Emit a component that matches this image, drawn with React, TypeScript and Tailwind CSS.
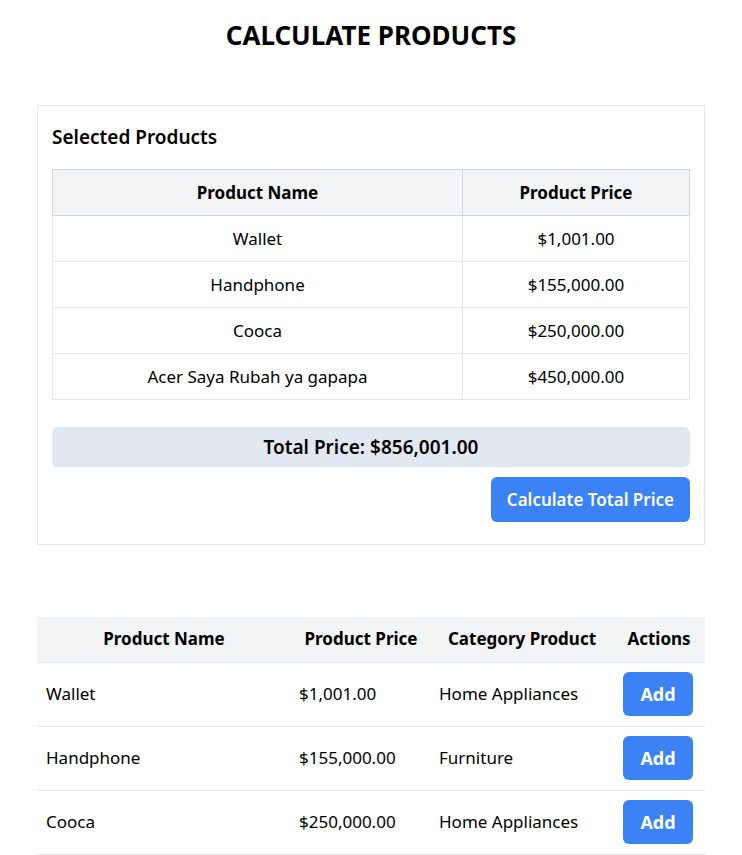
import { useState } from 'react';

interface Product {
  id: number;
  name: string;
  price: number;
  category: string;
}

const products: Product[] = [
  { id: 1, name: 'Wallet', price: 1001, category: 'Home Appliances' },
  { id: 2, name: 'Handphone', price: 155000, category: 'Furniture' },
  { id: 3, name: 'Cooca', price: 250000, category: 'Home Appliances' },
  { id: 4, name: 'Acer Saya Rubah ya gapapa', price: 450000, category: 'Electronics' },
];

const fmt = (n: number) =>
  '$' + n.toLocaleString('en-US', { minimumFractionDigits: 2, maximumFractionDigits: 2 });

export default function App() {
  const [selected, setSelected] = useState<Product[]>(products);
  const [total, setTotal] = useState(856001);

  return (
    <main className="min-h-screen bg-white text-black text-[17px] font-['Noto_Sans',sans-serif]">
      <h1 className="pt-[19px] text-center text-[26px] font-bold leading-8">CALCULATE PRODUCTS</h1>

      <div className="mx-auto w-[668px]">
        {/* Selected products */}
        <section className="mt-[54px] border border-[#e5e7eb] px-[14px] pt-[17px] pb-[22px]">
          <h2 className="text-[19px] font-semibold leading-7 mb-[18px]">Selected Products</h2>

          <table className="w-full border-collapse border border-[#d1d5db]">
            <thead>
              <tr className="h-[46px] bg-[#f3f4f6]">
                <th className="w-[410px] border border-[#d1d5db] px-2.5 py-0 text-center font-bold leading-6">
                  Product Name
                </th>
                <th className="border border-[#d1d5db] px-2.5 py-0 text-center font-bold leading-6">
                  Product Price
                </th>
              </tr>
            </thead>
            <tbody>
              {selected.map((p) => (
                <tr key={p.id} className="h-[46px]">
                  <td className="border border-[#e5e7eb] px-2.5 py-0 text-center leading-6">{p.name}</td>
                  <td className="border border-[#e5e7eb] px-2.5 py-0 text-center leading-6">{fmt(p.price)}</td>
                </tr>
              ))}
            </tbody>
          </table>

          <div className="mt-[27px] rounded-md bg-[#e2e8f0] py-1.5 text-center text-[19px] font-semibold leading-7">
            Total Price: {fmt(total)}
          </div>

          <div className="mt-2.5 flex justify-end">
            <button
              onClick={() => setTotal(selected.reduce((s, p) => s + p.price, 0))}
              className="rounded-md bg-[#3b82f6] px-4 py-[8.5px] text-[17px] font-semibold leading-7 text-white"
            >
              Calculate Total Price
            </button>
          </div>
        </section>

        {/* Product list */}
        <table className="mt-[72px] w-full border-collapse">
          <thead>
            <tr className="h-[45px] bg-[#f3f4f6] border-b border-[#e5e7eb]">
              <th className="w-[254px] px-2.5 py-0 text-center font-bold leading-6">Product Name</th>
              <th className="w-[140px] px-2 py-0 text-center font-bold leading-6">Product Price</th>
              <th className="w-[182px] px-2 py-0 text-center font-bold leading-6">Category Product</th>
              <th className="px-2 py-0 text-center font-bold leading-6">Actions</th>
            </tr>
          </thead>
          <tbody>
            {products.map((p) => (
              <tr key={p.id} className="h-[64px] border-b border-[#e5e7eb]">
                <td className="px-[9px] py-0 leading-6">{p.name}</td>
                <td className="px-2 py-0 leading-6">{fmt(p.price)}</td>
                <td className="px-2 py-0 leading-6">{p.category}</td>
                <td className="px-2.5 py-0">
                  <button
                    onClick={() =>
                      setSelected((s) => (s.find((x) => x.id === p.id) ? s : [...s, p]))
                    }
                    className="w-[70px] rounded-md bg-[#3b82f6] py-2 text-center text-lg font-bold leading-7 text-white"
                  >
                    Add
                  </button>
                </td>
              </tr>
            ))}
          </tbody>
        </table>
      </div>
    </main>
  );
}
